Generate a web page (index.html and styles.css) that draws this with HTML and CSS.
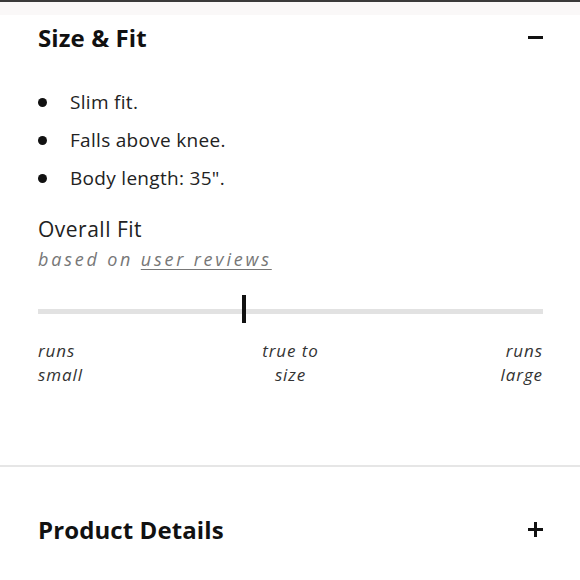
FILE: index.html
```html
<!DOCTYPE html>
<html>
<head>
<meta charset="utf-8">
<link rel="stylesheet" href="styles.css">
</head>
<body>
<div class="topbar"></div>
<div class="band"></div>
<section class="panel">
  <div class="panel-head">
    <h2 class="panel-title">Size &amp; Fit</h2>
    <span class="icon-minus"></span>
  </div>
  <ul class="facts">
    <li>Slim fit.</li>
    <li>Falls above knee.</li>
    <li>Body length: 35".</li>
  </ul>
  <div class="fit">
    <div class="fit-title">Overall Fit</div>
    <div class="fit-sub">based on <span class="link">user reviews</span></div>
    <div class="track"><span class="marker"></span></div>
    <div class="scale">
      <div class="scale-item left">runs<br>small</div>
      <div class="scale-item mid">true to<br>size</div>
      <div class="scale-item right">runs<br>large</div>
    </div>
  </div>
</section>
<div class="divider"></div>
<section class="panel closed">
  <div class="panel-head">
    <h2 class="panel-title">Product Details</h2>
    <span class="icon-plus"></span>
  </div>
</section>
</body>
</html>
```

FILE: styles.css
```css
html, body {
  margin: 0;
  padding: 0;
  background: #fff;
  font-family: "Open Sans", "Noto Sans", sans-serif;
  color: #222;
}
.topbar {
  height: 2px;
  background: #3a3a3a;
}
.band {
  height: 13px;
  background: #faf8f8;
}
.panel {
  padding: 0 37px 0 38px;
}
.panel-head {
  display: flex;
  align-items: center;
  justify-content: space-between;
  height: 44px;
}
.panel-title {
  margin: 0;
  font-size: 24px;
  font-weight: 700;
  color: #111;
  letter-spacing: 0.1px;
}
.icon-minus {
  display: block;
  width: 15px;
  height: 3px;
  background: #111;
}
.icon-plus {
  position: relative;
  display: block;
  width: 15px;
  height: 15px;
}
.icon-plus::before,
.icon-plus::after {
  content: "";
  position: absolute;
  background: #111;
}
.icon-plus::before {
  left: 0;
  top: 6px;
  width: 15px;
  height: 3px;
}
.icon-plus::after {
  left: 6px;
  top: 0;
  width: 3px;
  height: 15px;
}
.facts {
  list-style: none;
  margin: 24px 0 0;
  padding: 0;
}
.facts li {
  position: relative;
  padding-left: 32px;
  font-size: 19px;
  line-height: 38px;
  color: #222;
  letter-spacing: 0.3px;
}
.facts li::before {
  content: "";
  position: absolute;
  left: 0;
  top: 15px;
  width: 9px;
  height: 9px;
  border-radius: 50%;
  background: #111;
}
.fit {
  margin-top: 17px;
}
.fit-title {
  font-size: 21px;
  line-height: 30px;
  color: #222;
  letter-spacing: 0.5px;
}
.fit-sub {
  font-size: 18px;
  line-height: 30px;
  font-style: italic;
  color: #777;
  letter-spacing: 2.8px;
}
.fit-sub .link {
  text-decoration: underline;
  text-underline-offset: 3px;
}
.track {
  position: relative;
  margin-top: 35px;
  height: 5px;
  background: #e2e2e2;
}
.marker {
  position: absolute;
  left: 204px;
  top: -14px;
  width: 4px;
  height: 28px;
  background: #111;
}
.scale {
  display: grid;
  grid-template-columns: 1fr auto 1fr;
  margin-top: 25px;
}
.scale-item {
  font-size: 17px;
  line-height: 23.5px;
  font-style: italic;
  color: #333;
  letter-spacing: 0.9px;
}
.scale-item.mid {
  text-align: center;
}
.scale-item.right {
  text-align: right;
}
.divider {
  margin-top: 79px;
  height: 2px;
  background: #e6e6e6;
}
.closed .panel-head {
  margin-top: 40px;
}
```
